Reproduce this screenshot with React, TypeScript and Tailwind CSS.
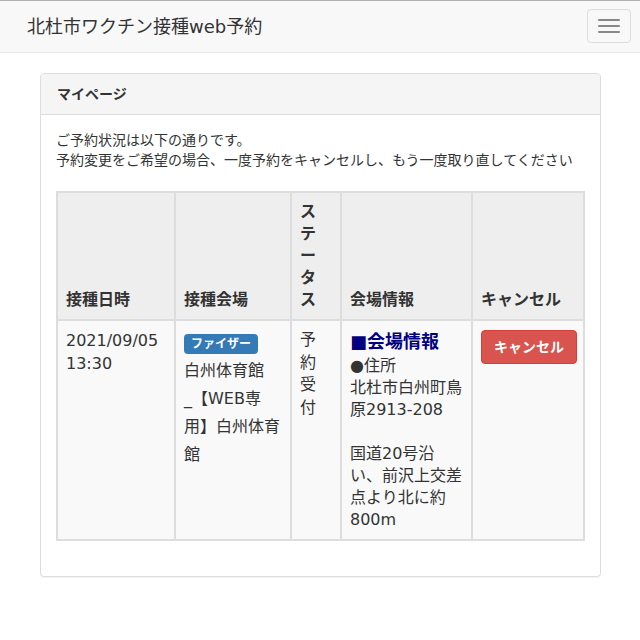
import React from "react";

export default function App() {
  return (
    <div className="min-h-[640px] bg-white text-[#333] font-['DejaVu_Sans','Noto_Sans_CJK_JP',sans-serif]">
      <nav className="flex h-[53px] items-center justify-between border-t border-b border-t-[#b0b0b0] border-b-[#e7e7e7] bg-[#f8f8f8] pl-[27px] pr-[9px]">
        <div className="text-[18px] leading-[20px] text-[#333] mt-[1px]">北杜市ワクチン接種web予約</div>
        <button className="flex h-[34px] w-[44px] flex-col items-center justify-center gap-[4px] rounded-[4px] border border-[#ddd] mt-[-1px]">
          <span className="block h-[2px] w-[22px] rounded-[1px] bg-[#888]" />
          <span className="block h-[2px] w-[22px] rounded-[1px] bg-[#888]" />
          <span className="block h-[2px] w-[22px] rounded-[1px] bg-[#888]" />
        </button>
      </nav>

      <div className="ml-[40px] mr-[39px] mt-[20px] rounded-[4px] border border-[#ddd] bg-white shadow-[0_1px_1px_rgba(0,0,0,0.05)]">
        <div className="h-[41px] rounded-t-[3px] border-b border-[#ddd] bg-[#f5f5f5] px-[16px] pt-[10px] text-[14px] font-bold leading-[20px]">
          マイページ
        </div>
        <div className="p-[15px]">
          <p className="mb-[21px] text-[14px] leading-[20px]">
            ご予約状況は以下の通りです。
            <br />
            予約変更をご希望の場合、一度予約をキャンセルし、もう一度取り直してください
          </p>
          <table className="mb-[20px] w-full table-fixed border-collapse border-2 border-[#ddd] text-[16px]">
            <colgroup>
              <col className="w-[118px]" />
              <col className="w-[116px]" />
              <col className="w-[50px]" />
              <col className="w-[131px]" />
              <col />
            </colgroup>
            <thead>
              <tr className="bg-[#eeeeee]">
                <th className="border-2 border-[#ddd] p-[8px] text-left align-bottom font-bold leading-[22px]">接種日時</th>
                <th className="border-2 border-[#ddd] p-[8px] text-left align-bottom font-bold leading-[22px]">接種会場</th>
                <th className="border-2 border-[#ddd] p-[8px] text-left align-bottom font-bold leading-[22px]">
                  ス<br />テ<br />ー<br />タ<br />ス
                </th>
                <th className="border-2 border-[#ddd] p-[8px] text-left align-bottom font-bold leading-[22px]">会場情報</th>
                <th className="border-2 border-[#ddd] p-[8px] text-left align-bottom font-bold leading-[22px] whitespace-nowrap">キャンセル</th>
              </tr>
            </thead>
            <tbody>
              <tr className="bg-[#f9f9f9]">
                <td className="border-2 border-[#ddd] p-[8px] align-top leading-[23px]">
                  2021/09/05
                  <br />
                  13:30
                </td>
                <td className="border-2 border-[#ddd] p-[8px] align-top leading-[28px]">
                  <span className="inline-block h-[20px] rounded-[4px] bg-[#337ab7] px-[7px] align-middle text-[12px] font-bold leading-[20px] text-white">
                    ファイザー
                  </span>
                  <br />
                  白州体育館
                  <br />
                  _【WEB専
                  <br />
                  用】白州体育
                  <br />
                  館
                </td>
                <td className="border-2 border-[#ddd] p-[8px] align-top leading-[22.5px]">
                  予<br />約<br />受<br />付
                </td>
                <td className="border-2 border-[#ddd] p-[8px] align-top leading-[22px]">
                  <div className="text-[18px] font-bold leading-[25.7px] text-[#000080]">■会場情報</div>
                  ●住所
                  <br />
                  北杜市白州町鳥
                  <br />
                  原2913-208
                  <br />
                  <br />
                  国道20号沿
                  <br />
                  い、前沢上交差
                  <br />
                  点より北に約
                  <br />
                  800m
                </td>
                <td className="border-2 border-[#ddd] p-[8px] align-top">
                  <button className="mt-[1px] h-[34px] whitespace-nowrap rounded-[4px] border border-[#d43f3a] bg-[#d9534f] px-[12px] text-[14px] font-bold leading-[20px] text-white">
                    キャンセル
                  </button>
                </td>
              </tr>
            </tbody>
          </table>
        </div>
      </div>
    </div>
  );
}
